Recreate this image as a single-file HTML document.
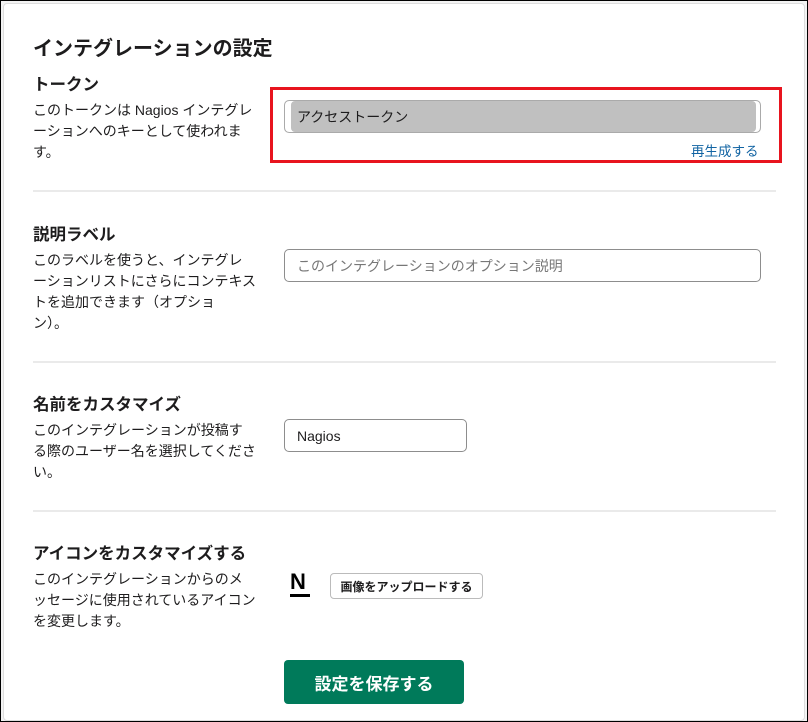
<!DOCTYPE html>
<html><head><meta charset="utf-8"><style>
*{margin:0;padding:0;box-sizing:border-box}
body{width:808px;height:722px;position:relative;background:#fff;font-family:"Liberation Sans","Noto Sans CJK JP",sans-serif;color:#1d1c1d;overflow:hidden}
.frame{position:absolute;left:0;top:0;width:808px;height:722px;border:1px solid #000;background:#f3f3f3}
.card{position:absolute;left:3px;top:3px;right:3px;bottom:1px;background:#fff;border:1px solid #ddd;border-radius:4px}
.a{position:absolute;white-space:nowrap}
h1{position:absolute;left:33px;top:32px;font-size:20px;font-weight:bold}
h2{position:absolute;left:33px;font-size:16.5px;font-weight:bold}
.d{position:absolute;left:33px;font-size:14px;line-height:21px;color:#1d1c1d;white-space:nowrap}
.hr{position:absolute;left:33px;width:743px;height:2px;background:#eaeaea}
.in{position:absolute;border:1px solid #8d8d8d;border-radius:5px;background:#fff;font-size:14px;padding-left:12px;display:flex;align-items:center}
</style></head><body>
<div class="frame"></div><div class="card"></div>
<h1>インテグレーションの設定</h1>

<h2 style="top:71px">トークン</h2>
<div class="d" style="top:100px">このトークンは Nagios インテグレ<br>ーションへのキーとして使われま<br>す。</div>
<div class="a" style="left:270px;top:87px;width:512px;height:76px;border:3px solid #e8141e"></div>
<div class="in" style="left:284px;top:100px;width:477px;height:33px;background:#c0c0c0;border-color:#aaa;box-shadow:inset 6px 0 0 #fff,inset -4px 0 0 #fff">アクセストークン</div>
<div class="a" style="left:691px;top:140px;font-size:13.5px;color:#1264a3">再生成する</div>
<div class="hr" style="top:190px"></div>

<h2 style="top:221px">説明ラベル</h2>
<div class="d" style="top:250px">このラベルを使うと、インテグレ<br>ーションリストにさらにコンテキス<br>トを追加できます（オプショ<br>ン）。</div>
<div class="in" style="left:284px;top:249px;width:477px;height:33px;color:#777">このインテグレーションのオプション説明</div>
<div class="hr" style="top:361px"></div>

<h2 style="top:391px">名前をカスタマイズ</h2>
<div class="d" style="top:420px">このインテグレーションが投稿す<br>る際のユーザー名を選択してくださ<br>い。</div>
<div class="in" style="left:284px;top:419px;width:183px;height:33px">Nagios</div>
<div class="hr" style="top:510px"></div>

<h2 style="top:540px">アイコンをカスタマイズする</h2>
<div class="d" style="top:569px">このインテグレーションからのメ<br>ッセージに使用されているアイコン<br>を変更します。</div>
<div class="a" style="left:290px;top:570px;font-size:22px;font-weight:900;line-height:24px;color:#000">N</div>
<div class="a" style="left:290px;top:594px;width:20px;height:3px;background:#000"></div>
<div class="a" style="left:330px;top:573px;width:153px;height:26px;border:1px solid #bbb;border-radius:4px;font-size:12px;font-weight:bold;display:flex;align-items:center;justify-content:center">画像をアップロードする</div>
<div class="a" style="left:284px;top:660px;width:180px;height:44px;background:#007a5a;border-radius:4px;color:#fff;font-size:17px;font-weight:bold;display:flex;align-items:center;justify-content:center">設定を保存する</div>
</body></html>
